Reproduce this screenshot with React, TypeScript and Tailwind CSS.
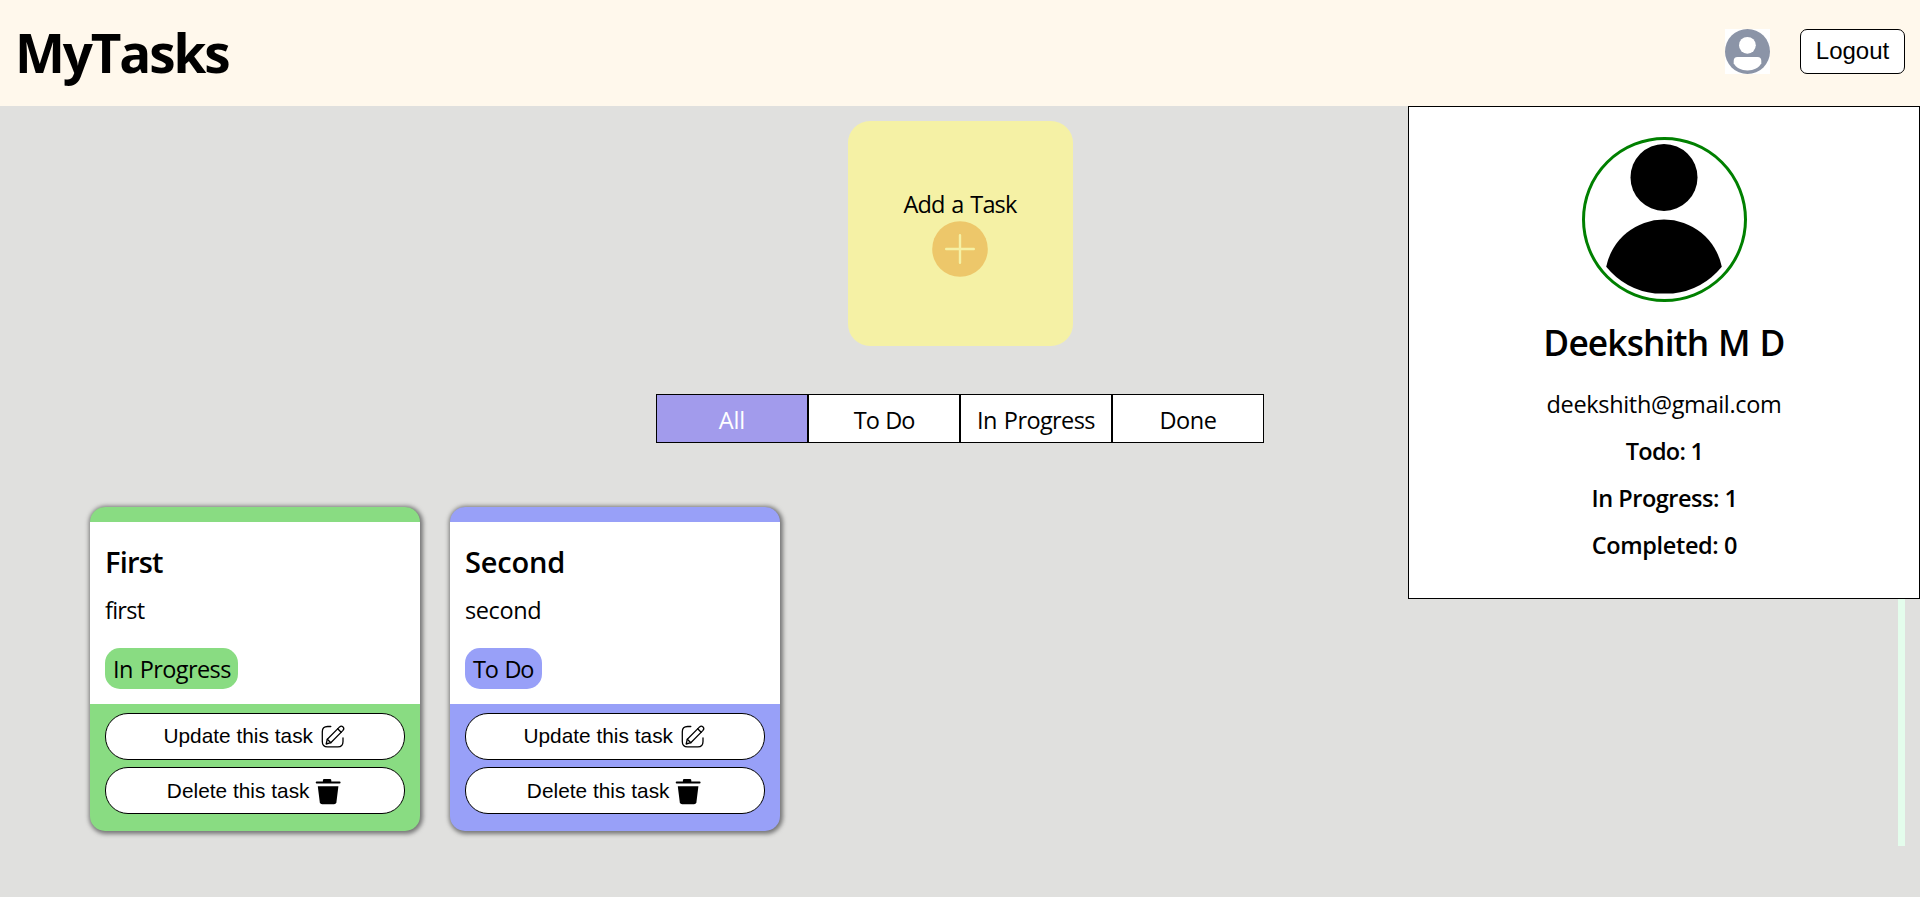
type Task = { title: string; titleClass: string; text: string; textClass: string; status: string; statusClass: string; color: string };

const tasks: Task[] = [
  {
    title: 'First',
    titleClass: 'tracking-[-0.8px]',
    text: 'first',
    textClass: 'tracking-[-0.75px]',
    status: 'In Progress',
    statusClass: 'w-[133px] tracking-[-0.6px]',
    color: 'bg-[#89dc82]',
  },
  {
    title: 'Second',
    titleClass: 'tracking-[-0.2px]',
    text: 'second',
    textClass: 'tracking-[-0.4px]',
    status: 'To Do',
    statusClass: 'w-[77px] tracking-[-1.1px]',
    color: 'bg-[#98a0f8]',
  },
];

const filters = [
  { label: 'All', look: 'bg-[#a29bec] text-white tracking-[-0.1px]' },
  { label: 'To Do', look: 'bg-white tracking-[-1.1px]' },
  { label: 'In Progress', look: 'bg-white tracking-[-0.6px]' },
  { label: 'Done', look: 'bg-white tracking-[-0.47px]' },
];

function AvatarIcon() {
  return (
    <svg viewBox="0 0 45 45" className="size-[45px] bg-white">
      <circle cx="22.5" cy="22.5" r="22.5" fill="#8b94a7" />
      <circle cx="22.4" cy="16.3" r="8.4" fill="#fff" />
      <path d="M12.5 28H32.5Q36.3 28 36.3 32V34.2C34.2 38.6 28.8 41.4 22.5 41.4S10.8 38.6 8.7 34.2V32Q8.7 28 12.5 28Z" fill="#fff" />
    </svg>
  );
}

function PersonIcon() {
  return (
    <svg viewBox="0 0 159 159" className="size-full">
      <circle cx="79" cy="37.4" r="33.5" />
      <path d="M21.2 126.7A59 59 0 0 1 136.8 126.7A75 75 0 0 1 88 153.5H70A75 75 0 0 1 21.2 126.7Z" />
    </svg>
  );
}

function EditIcon() {
  return (
    <svg viewBox="0 0 30 30" className="size-[30px]" fill="none" stroke="#000" strokeWidth="1.3" strokeLinecap="round" strokeLinejoin="round">
      <path d="M12.8 4.5H9.6Q4.3 4.5 4.3 9.8V19.5Q4.3 24.9 9.6 24.9H19.8Q25 24.9 25 19.5V16" />
      <path d="M8.2 22L9.3 17.2L21.6 4.9Q23.3 3.4 25 4.9Q26.6 6.6 25 8.4L12.8 20.7Z" />
      <path d="M9.3 17.2L12.8 20.7M19.7 6.8L23.1 10.2" />
    </svg>
  );
}

function TrashIcon() {
  return (
    <svg viewBox="0 0 30 30" className="size-[30px]">
      <path d="M10.2 3H16Q17.3 3 17.3 4.3V5.6H25.6Q26.6 5.6 26.6 6.6Q26.6 7.6 25.6 7.6H2.7Q1.7 7.6 1.7 6.6Q1.7 5.6 2.7 5.6H8.9V4.3Q8.9 3 10.2 3Z" />
      <path d="M3.8 10.2H24.4L22.4 26.2Q22 28.3 20 28.3H8.2Q6.2 28.3 5.8 26.2Z" />
    </svg>
  );
}

function TaskCard({ task }: { task: Task }) {
  return (
    <article className={`flex h-[324px] w-[330px] flex-col overflow-hidden rounded-[15px] pt-[15px] shadow-[1px_1px_4px_2px_#777] ${task.color}`}>
      <div className="flex h-[182px] flex-col items-start bg-white px-[15px] pt-5">
        <h2 className={`text-[29px] leading-10 font-semibold ${task.titleClass}`}>{task.title}</h2>
        <p className={`mt-3 text-[23.5px] leading-8 ${task.textClass}`}>{task.text}</p>
        <span className={`mt-[22px] h-[41px] rounded-[15px] pl-2 text-[23.5px] leading-[43px] whitespace-nowrap [word-spacing:1.5px] ${task.color} ${task.statusClass}`}>
          {task.status}
        </span>
      </div>
      <div className="flex flex-col gap-[7px] px-[15px] pt-[9px] font-['Liberation_Sans',Arial,sans-serif] text-[20.8px]">
        <button className="flex h-[47px] items-center justify-center gap-[4.6px] rounded-[23px] border border-black bg-white pl-px">
          <span className="pb-0.5 tracking-[0.03px]">Update this task</span>
          <EditIcon />
        </button>
        <button className="flex h-[47px] items-center justify-center gap-[4.6px] rounded-[23px] border border-black bg-white pl-px">
          <span className="tracking-[0.03px]">Delete this task</span>
          <TrashIcon />
        </button>
      </div>
    </article>
  );
}

function ProfilePanel() {
  return (
    <aside className="absolute top-[106px] right-0 flex h-[493px] w-[512px] flex-col items-center border border-black bg-white pt-[30px]">
      <div className="size-[165px] rounded-full border-[3px] border-[#008000]">
        <PersonIcon />
      </div>
      <h2 className="mt-4 text-[35.3px] leading-[48px] font-semibold tracking-[-0.85px] [word-spacing:1.5px]">Deekshith M D</h2>
      <p className="mt-[22px] text-[23.5px] leading-8 tracking-[-0.34px]">deekshith@gmail.com</p>
      <div className="mt-[15px] flex flex-col items-center gap-[15px] pl-px text-[23.5px] leading-8 font-semibold">
        <p className="tracking-[-0.73px]">Todo: 1</p>
        <p className="tracking-[-0.47px]">In Progress: 1</p>
        <p className="tracking-[-0.37px]">Completed: 0</p>
      </div>
    </aside>
  );
}

export default function App() {
  return (
    <div className="relative h-[897px] w-full overflow-hidden bg-[#e0e0de] font-['Open_Sans','Noto_Sans',sans-serif] text-black">
      <header className="flex h-[106px] items-start justify-between bg-[#fff8ec] pr-[15px] pl-[15px]">
        <h1 className="text-[53px] leading-[106px] font-bold tracking-[-2.15px]">MyTasks</h1>
        <div className="flex gap-[30px] pt-[29px]">
          <AvatarIcon />
          <button className="h-[45px] w-[105px] rounded-[7px] border border-black bg-white pb-0.5 font-['Liberation_Sans',Arial,sans-serif] text-2xl leading-[41px]">Logout</button>
        </div>
      </header>

      <main className="flex flex-col items-center">
        <button className="mt-[15px] flex size-[225px] flex-col items-center rounded-[22px] bg-[#f5f1a5] pt-[67px]">
          <span className="text-[23.5px] leading-8 tracking-[-0.85px] [word-spacing:1.5px]">Add a Task</span>
          <svg viewBox="0 0 56 56" className="mt-px size-14">
            <circle cx="28" cy="28" r="27.8" fill="#edc76a" />
            <path d="M28 14.2V41.8M14.2 28H41.8" stroke="#f5f1a5" strokeWidth="2.4" strokeLinecap="round" />
          </svg>
        </button>

        <nav className="mt-12 flex text-[23.5px]">
          {filters.map((f) => (
            <button key={f.label} className={`h-[49px] w-[152px] border border-black pt-[3px] leading-[44px] whitespace-nowrap [word-spacing:1.5px] ${f.look}`}>
              {f.label}
            </button>
          ))}
        </nav>

        <section className="flex h-[403px] w-full pr-[15px]">
          <div className="flex flex-1 gap-[30px] pt-16 pl-[90px]">
            {tasks.map((t) => (
              <TaskCard key={t.title} task={t} />
            ))}
          </div>
          <div className="w-[7px] bg-[#e4fdec]" />
        </section>
      </main>

      <ProfilePanel />
    </div>
  );
}
